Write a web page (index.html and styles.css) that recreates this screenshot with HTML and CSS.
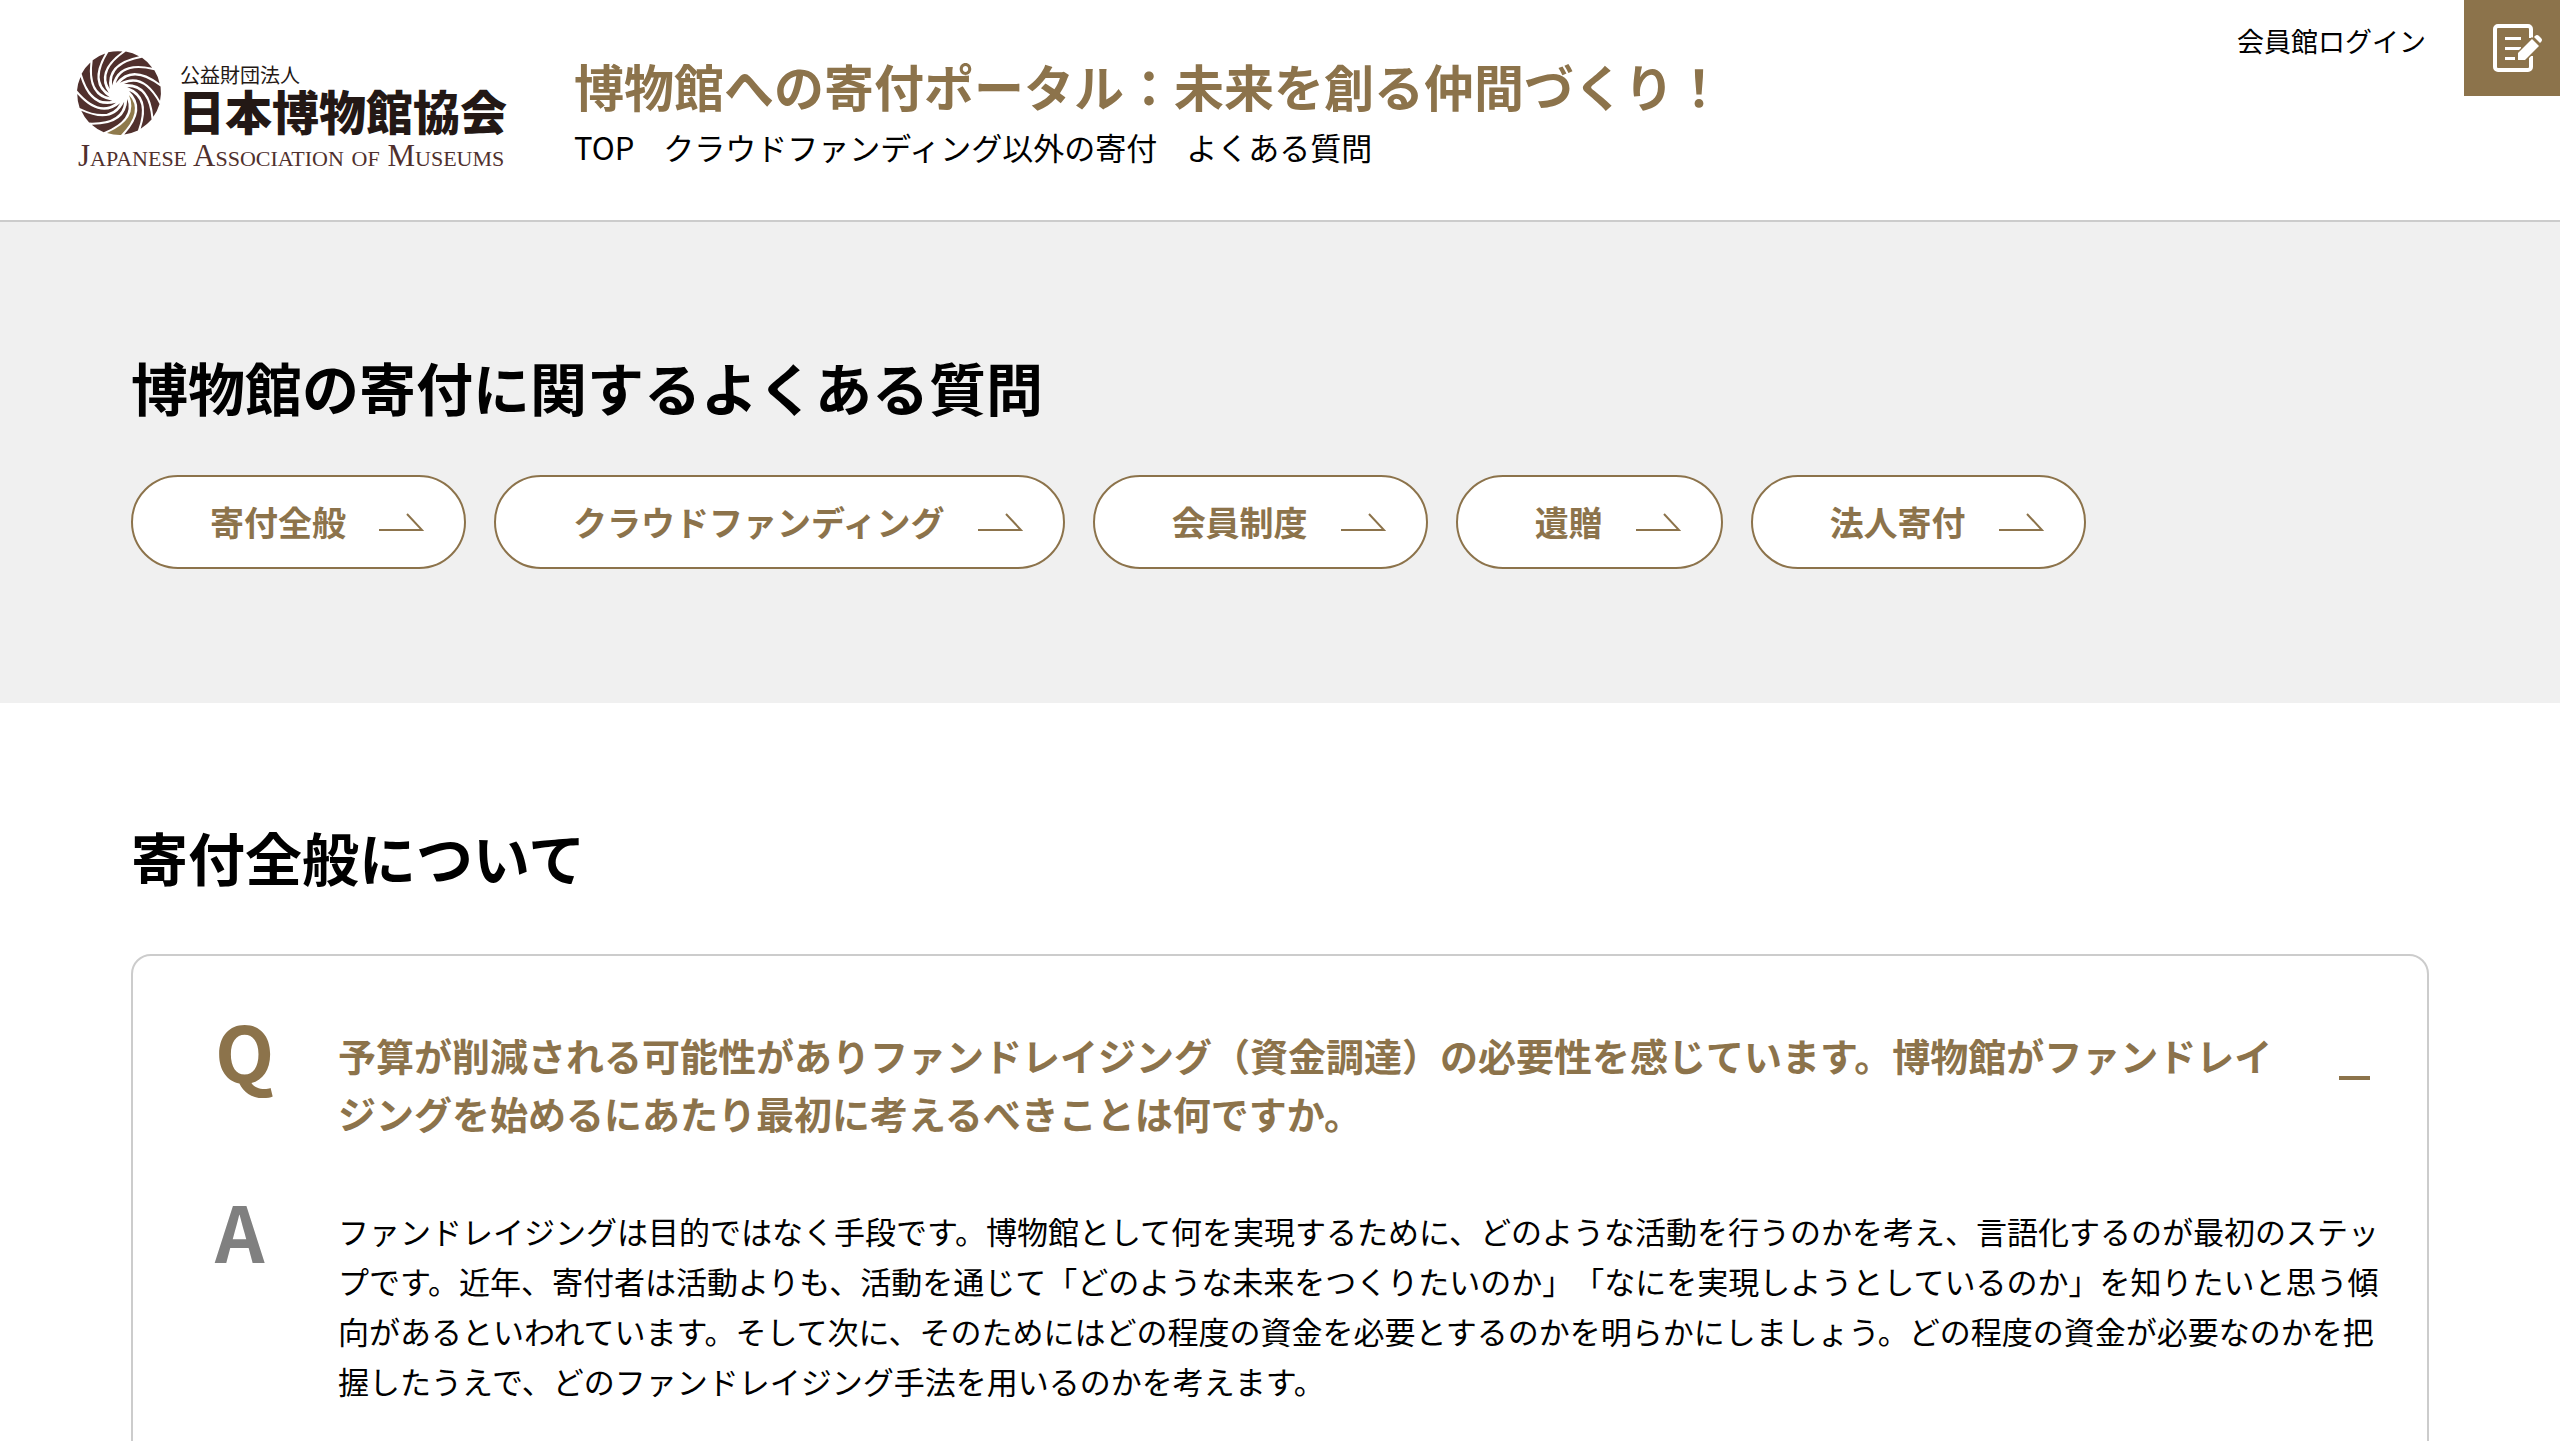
FILE: index.html
```html
<!DOCTYPE html>
<html lang="ja">
<head>
    <meta charset="UTF-8">
    <meta name="viewport" content="width=device-width, initial-scale=1">
    <title>よくある質問</title>
    <link rel="stylesheet" href="styles.css">
</head>
<body>
    <header class="header">
        <a class="logo" href="#">
            <span class="logo-top">
                <svg class="logo-mark" viewBox="-43 -43 86 86" aria-hidden="true">
                    <defs>
                        <path id="blade" d="M10 2 Q25 18 2 42 A42 42 0 0 1 -12 40 Q20 26 10 2Z"/>
                    </defs>
                    <g fill="#50302d">
                        <use href="#blade" transform="rotate(-24)"/>
                        <use href="#blade" transform="rotate(-48)"/>
                        <use href="#blade" transform="rotate(-72)"/>
                        <use href="#blade" transform="rotate(-96)"/>
                        <use href="#blade" transform="rotate(-120)"/>
                        <use href="#blade" transform="rotate(-144)"/>
                        <use href="#blade" transform="rotate(-168)"/>
                        <use href="#blade" transform="rotate(-192)"/>
                        <use href="#blade" transform="rotate(-216)"/>
                        <use href="#blade" transform="rotate(-240)"/>
                        <use href="#blade" transform="rotate(-264)"/>
                        <use href="#blade" transform="rotate(-288)"/>
                        <use href="#blade" transform="rotate(-312)"/>
                        <use href="#blade" transform="rotate(-336)"/>
                    </g>
                    <use href="#blade" fill="#8f7a4c"/>
                </svg>
                <span class="logo-name">
                    <span class="logo-type">公益財団法人</span>
                    <span class="logo-ja">日本博物館協会</span>
                </span>
            </span>
            <span class="logo-en">Japanese Association <small>of</small> Museums</span>
        </a>

        <div class="header-main">
            <p class="site-title">博物館への寄付ポータル：未来を創る仲間づくり！</p>
            <nav class="nav">
                <a href="#">TOP</a>
                <a href="#">クラウドファンディング以外の寄付</a>
                <a href="#">よくある質問</a>
            </nav>
        </div>

        <div class="header-side">
            <a class="login" href="#">会員館ログイン</a>
            <a class="entry" href="#" aria-label="申し込み">
                <svg class="entry-icon" viewBox="0 0 50 48" aria-hidden="true">
                    <path d="M38 14V5a3 3 0 0 0-3-3H5a3 3 0 0 0-3 3v38a3 3 0 0 0 3 3h30a3 3 0 0 0 3-3V32" fill="none" stroke="#fff" stroke-width="4"/>
                    <path d="M12 14.500h16M12 24.500h16M12 34.500h10" stroke="#fff" stroke-width="3"/>
                    <path d="M25 36v-7l14-14 7 7-14 14z" fill="#fff" stroke="#8c734b" stroke-width="3" paint-order="stroke"/>
                    <path d="M41 13l1-1q2-2 4 0l2 2q2 2 0 4l-1 1z" fill="#fff"/>
                </svg>
            </a>
        </div>
    </header>

    <section class="hero">
        <h1>博物館の寄付に関するよくある質問</h1>
        <ul class="anchors">
            <li><a href="#general">寄付全般<svg class="arrow" viewBox="0 0 45 18" aria-hidden="true"><path d="M0 17h43L28 1"/></svg></a></li>
            <li><a href="#crowdfunding">クラウドファンディング<svg class="arrow" viewBox="0 0 45 18" aria-hidden="true"><path d="M0 17h43L28 1"/></svg></a></li>
            <li><a href="#member">会員制度<svg class="arrow" viewBox="0 0 45 18" aria-hidden="true"><path d="M0 17h43L28 1"/></svg></a></li>
            <li><a href="#bequest">遺贈<svg class="arrow" viewBox="0 0 45 18" aria-hidden="true"><path d="M0 17h43L28 1"/></svg></a></li>
            <li><a href="#corporate">法人寄付<svg class="arrow" viewBox="0 0 45 18" aria-hidden="true"><path d="M0 17h43L28 1"/></svg></a></li>
        </ul>
    </section>

    <main class="faq" id="general">
        <h2>寄付全般について</h2>
        <details class="card" open>
            <summary class="question">
                <span class="mark">Q</span>
                <span class="question-text">予算が削減される可能性がありファンドレイジング（資金調達）の必要性を感じています。博物館がファンドレイジングを始めるにあたり最初に考えるべきことは何ですか。</span>
                <span class="minus"></span>
            </summary>
            <div class="answer">
                <span class="mark mark-a">A</span>
                <p>ファンドレイジングは目的ではなく手段です。博物館として何を実現するために、どのような活動を行うのかを考え、言語化するのが最初のステップです。近年、寄付者は活動よりも、活動を通じて「どのような未来をつくりたいのか」「なにを実現しようとしているのか」を知りたいと思う傾向があるといわれています。そして次に、そのためにはどの程度の資金を必要とするのかを明らかにしましょう。どの程度の資金が必要なのかを把握したうえで、どのファンドレイジング手法を用いるのかを考えます。</p>
            </div>
        </details>
    </main>
</body>
</html>
```

FILE: styles.css
```css
* {
    box-sizing: border-box;
}

body {
    margin: 0;
    background: #fff;
    color: #000;
    font-family: "Noto Sans CJK JP", sans-serif;
    font-size: 31px;
    line-height: 50px;
    text-spacing-trim: space-all;
}

a {
    color: inherit;
    text-decoration: none;
}

h1,
h2,
p,
ul {
    margin: 0;
    padding: 0;
}

/* header */

.header {
    display: flex;
    align-items: flex-start;
    height: 222px;
    padding-left: 76px;
    border-bottom: 2px solid #ccc;
}

.logo {
    width: 434px;
    margin-top: 50px;
}

.logo-top {
    display: flex;
    gap: 16px;
}

.logo-mark {
    flex: none;
    width: 86px;
    height: 86px;
}

.logo-name {
    display: flex;
    flex-direction: column;
    padding-top: 12px;
    color: #231815;
}

.logo-type {
    padding-left: 2px;
    font-size: 20px;
    line-height: 26px;
}

.logo-ja {
    font-size: 47px;
    font-weight: 900;
    line-height: 44px;
    white-space: nowrap;
}

.logo-en {
    display: block;
    padding-left: 2px;
    color: #50302d;
    font-family: "Liberation Serif", serif;
    font-size: 31px;
    font-variant: small-caps;
    line-height: 40px;
    white-space: nowrap;
}

.logo-en small {
    font-size: 31px;
}

.header-main {
    flex: 1;
    margin-top: 54px;
    padding-left: 64px;
}

.site-title {
    color: #8c734b;
    font-size: 50px;
    font-weight: bold;
    line-height: 62px;
}

.nav {
    display: flex;
    gap: 29px;
    line-height: 62px;
}

.header-side {
    display: flex;
    gap: 38px;
}

.login {
    padding-top: 16px;
    font-size: 27px;
}

.entry {
    display: flex;
    align-items: center;
    justify-content: flex-end;
    width: 96px;
    height: 96px;
    padding-right: 17px;
    background: #8c734b;
}

.entry-icon {
    width: 50px;
    height: 48px;
}

/* page title and anchor buttons */

.hero {
    padding: 124px 131px 134px;
    background: #f0f0f0;
}

h1,
h2 {
    font-size: 57px;
    font-weight: bold;
    line-height: 80px;
}

.anchors {
    display: flex;
    flex-wrap: wrap;
    gap: 28px;
    margin-top: 49px;
    list-style: none;
}

.anchors a {
    display: flex;
    align-items: center;
    gap: 33px;
    height: 94px;
    padding: 0 40px 0 77px;
    border: 2px solid #8c734b;
    border-radius: 47px;
    background: #fff;
    color: #8c734b;
    font-size: 34px;
    font-weight: bold;
}

.arrow {
    width: 45px;
    height: 18px;
    fill: none;
    stroke: #8c734b;
    stroke-width: 2;
}

/* faq */

.faq {
    padding: 113px 131px;
}

.card {
    margin-top: 58px;
    padding: 70px 42px 72px 82px;
    border: 2px solid #ccc;
    border-radius: 20px;
}

.question,
.answer {
    display: flex;
}

.question {
    align-items: flex-start;
    color: #8c734b;
    font-size: 38px;
    font-weight: bold;
    line-height: 58px;
    list-style: none;
    cursor: pointer;
}

.mark {
    flex: none;
    width: 123px;
    font-size: 77px;
    font-weight: bold;
    line-height: 48px;
}

.mark-a {
    color: #808080;
}

.question-text {
    flex: 1;
}

.minus {
    align-self: center;
    width: 31px;
    height: 4px;
    margin: 0 15px 12px 52px;
    background: #8c734b;
}

.answer {
    margin-top: 64px;
}
```
